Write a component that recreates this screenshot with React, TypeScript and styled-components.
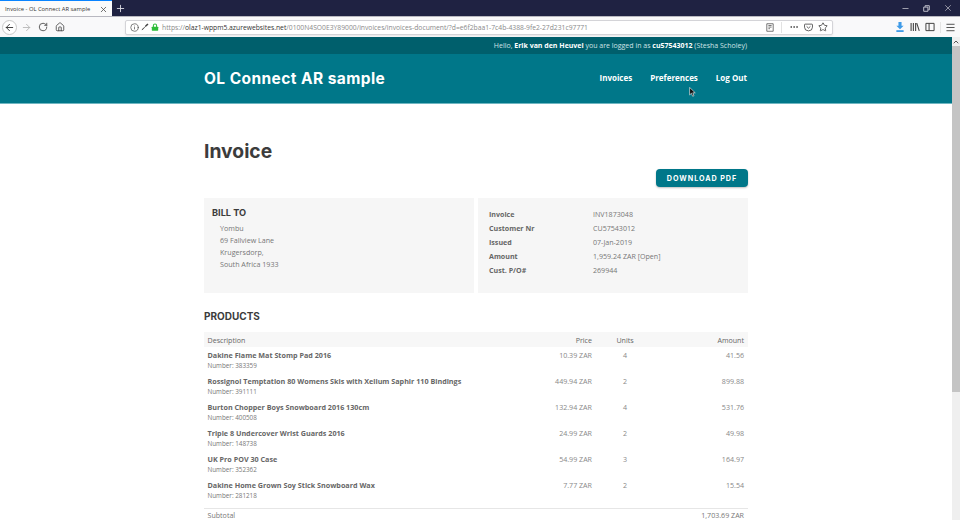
import React from 'react'
import styled, { createGlobalStyle } from 'styled-components'
import { ArrowLeft, ArrowRight, RotateCw, Home, Info, X, Plus, Minus, Star, MoreHorizontal, Menu, ChevronUp } from 'lucide-react'

const GlobalStyle = createGlobalStyle`
  html, body { margin: 0; padding: 0; height: 100%; overflow: hidden; background: #fff; }
  body { font-family: "Open Sans", "Liberation Sans", sans-serif; color: #666; }
  * { box-sizing: border-box; }
`

const products = [
  { name: 'Dakine Flame Mat Stomp Pad 2016', number: '383359', price: '10.39 ZAR', units: 4, amount: '41.56' },
  { name: 'Rossignol Temptation 80 Womens Skis with Xelium Saphir 110 Bindings', number: '391111', price: '449.94 ZAR', units: 2, amount: '899.88' },
  { name: 'Burton Chopper Boys Snowboard 2016 130cm', number: '400508', price: '132.94 ZAR', units: 4, amount: '531.76' },
  { name: 'Triple 8 Undercover Wrist Guards 2016', number: '148738', price: '24.99 ZAR', units: 2, amount: '49.98' },
  { name: 'UK Pro POV 30 Case', number: '352362', price: '54.99 ZAR', units: 3, amount: '164.97' },
  { name: 'Dakine Home Grown Soy Stick Snowboard Wax', number: '281218', price: '7.77 ZAR', units: 2, amount: '15.54' },
]

const details = [
  ['Invoice', 'INV1873048'],
  ['Customer Nr', 'CU57543012'],
  ['Issued', '07-Jan-2019'],
  ['Amount', '1,959.24 ZAR [Open]'],
  ['Cust. P/O#', '269944'],
]

const App: React.FC = () => (
  <Window>
    <GlobalStyle />
    <TabStrip>
      <Tab>
        <TabTitle>Invoice - OL Connect AR sample</TabTitle>
        <X size={9} color="#444" />
      </Tab>
      <NewTab><Plus size={11} color="#d8d8e0" /></NewTab>
      <WindowControls>
        <Minus size={9} color="#c8c8d0" />
        <RestoreIcon viewBox="0 0 10 10">
          <path d="M3 2.5V1h6v6H7.5M1 3h6v6H1z" fill="none" stroke="#d8d8e0" strokeWidth="1.2" />
        </RestoreIcon>
        <X size={10} color="#a8a8b4" />
      </WindowControls>
    </TabStrip>
    <Toolbar>
      <BackButton><ArrowLeft size={11} color="#333" /></BackButton>
      <ToolIcon><ArrowRight size={11} color="#b8b8b8" /></ToolIcon>
      <ToolIcon><RotateCw size={10} color="#444" /></ToolIcon>
      <ToolIcon><Home size={10} color="#444" /></ToolIcon>
      <UrlBar>
        <Info size={9} color="#555" />
        <UrlGlyph viewBox="0 0 10 10">
          <path d="M9.4 1.8 7 4.2a2 2 0 0 1-1.4.4L2.2 8.4.8 9.2l.6-1.6 3.7-3.3a2 2 0 0 1 .5-1.5L8 .6z" fill="#444" />
        </UrlGlyph>
        <UrlGlyph viewBox="0 0 10 10">
          <path d="M3 5V3.2a2 2 0 0 1 4 0V5" fill="none" stroke="#2ebd3a" strokeWidth="1.3" />
          <rect x="1" y="4.6" width="8" height="5.2" rx="0.6" fill="#2ebd3a" />
        </UrlGlyph>
        <Url>https://<b>olaz1-wppm5.azurewebsites.net</b>/0100N4SO0E3Y89000/invoices/invoices-document/?d=e6f2baa1-7c4b-4388-9fe2-27d231c97771</Url>
        <UrlActions>
          <ReaderIcon viewBox="0 0 10 11">
            <path d="M1 .8h8v9.4H1zM3 3h4M3 5h4M3 7h2" fill="none" stroke="#555" strokeWidth="1" />
          </ReaderIcon>
          <Divider />
          <MoreHorizontal size={10} color="#444" />
          <PocketIcon viewBox="0 0 12 11">
            <path d="M1.5 1h9a.8.8 0 0 1 .8.8V5a5.3 5 0 0 1-10.6 0V1.8A.8.8 0 0 1 1.5 1zM3.5 4 6 6.4 8.5 4" fill="none" stroke="#444" strokeWidth="1.1" />
          </PocketIcon>
          <Star size={10} color="#444" />
        </UrlActions>
      </UrlBar>
      <RightTools>
        <ToolGlyph viewBox="0 0 11 11">
          <path d="M3.8 0h3.4v4h2.3L5.5 8 1.5 4h2.3z" fill="#3f9be8" />
          <rect x="1.5" y="9" width="8" height="2" fill="#3f9be8" />
        </ToolGlyph>
        <ToolGlyph viewBox="0 0 11 11">
          <path d="M1.2 1v9M3.7 1v9M6.2 1v9M7.4 1.2l2.8 8.6" fill="none" stroke="#444" strokeWidth="1.2" />
        </ToolGlyph>
        <ToolGlyph viewBox="0 0 11 11">
          <path d="M1 1.5h9v8H1zM4.5 1.5v8" fill="none" stroke="#444" strokeWidth="1.1" />
        </ToolGlyph>
        <MenuDivider />
        <Menu size={11} color="#444" />
      </RightTools>
    </Toolbar>
    <Viewport>
      <Page>
        <UserBar>
          <UserBarInner>
            Hello, <strong>Erik van den Heuvel</strong> you are logged in as <strong>cu57543012</strong> (Stesha Scholey)
          </UserBarInner>
        </UserBar>
        <Header>
          <HeaderInner>
            <Brand>OL Connect AR sample</Brand>
            <Nav>
              <NavLink>Invoices</NavLink>
              <NavLink>Preferences</NavLink>
              <NavLink>Log Out</NavLink>
            </Nav>
          </HeaderInner>
        </Header>
        <Cursor viewBox="0 0 8 12">
          <path d="M.5.5v9l2.2-2 1.5 3.6 1.6-.7L4.3 7h3z" fill="#111" stroke="#fff" strokeWidth=".7" />
        </Cursor>
        <Content>
          <PageTitle>Invoice</PageTitle>
          <Actions>
            <PdfButton>DOWNLOAD PDF</PdfButton>
          </Actions>
          <Panels>
            <Panel>
              <PanelHeading>BILL TO</PanelHeading>
              <Address>
                <div>Yombu</div>
                <div>69 Fallview Lane</div>
                <div>Krugersdorp,</div>
                <div>South Africa 1933</div>
              </Address>
            </Panel>
            <DetailPanel>
              {details.map(([label, value]) => (
                <React.Fragment key={label}>
                  <DetailLabel>{label}</DetailLabel>
                  <span>{value}</span>
                </React.Fragment>
              ))}
            </DetailPanel>
          </Panels>
          <SectionHeading>PRODUCTS</SectionHeading>
          <TableHead>
            <span>Description</span>
            <Price>Price</Price>
            <Units>Units</Units>
            <Amount>Amount</Amount>
          </TableHead>
          {products.map((p) => (
            <ProductRow key={p.number}>
              <div>
                <ProductName>{p.name}</ProductName>
                <ProductNumber>Number: {p.number}</ProductNumber>
              </div>
              <Price>{p.price}</Price>
              <Units>{p.units}</Units>
              <Amount>{p.amount}</Amount>
            </ProductRow>
          ))}
          <SubtotalRow>
            <span>Subtotal</span>
            <Amount>1,703.69 ZAR</Amount>
          </SubtotalRow>
        </Content>
      </Page>
      <Scrollbar>
        <ScrollArrow><ChevronUp size={8} color="#555" strokeWidth={3} /></ScrollArrow>
        <ScrollThumb />
      </Scrollbar>
    </Viewport>
  </Window>
)

const Window = styled.div`
  width: 960px;
  height: 520px;
  display: flex;
  flex-direction: column;
  overflow: hidden;
`

const TabStrip = styled.div`
  height: 16px;
  flex: none;
  display: flex;
  background: #1f2242;
`

const Tab = styled.div`
  width: 112px;
  display: flex;
  align-items: center;
  justify-content: space-between;
  padding: 1px 4px 0 5px;
  background: #fbfbfb;
  border-top: 1px solid #0a84ff;
`

const TabTitle = styled.span`
  font-size: 5.8px;
  color: #333;
  white-space: nowrap;
`

const NewTab = styled.div`
  width: 16px;
  display: flex;
  align-items: center;
  justify-content: center;
`

const WindowControls = styled.div`
  margin-left: auto;
  width: 52px;
  margin-right: 7px;
  display: flex;
  align-items: center;
  justify-content: space-between;
`

const RestoreIcon = styled.svg`
  width: 7px;
  height: 7px;
`

const Toolbar = styled.div`
  height: 21px;
  flex: none;
  display: flex;
  align-items: center;
  padding: 0 4.5px 0 2px;
  background: #f9f9fa;
  border-top: 1px solid #b8b8c0;
`

const BackButton = styled.div`
  width: 15px;
  height: 15px;
  display: flex;
  align-items: center;
  justify-content: center;
  border: 1px solid #c8c8c8;
  border-radius: 50%;
  background: #fff;
`

const ToolIcon = styled.div`
  width: 16px;
  margin-left: 1px;
  display: flex;
  justify-content: center;
`

const UrlBar = styled.div`
  width: 708px;
  height: 15px;
  margin-left: 57px;
  display: flex;
  align-items: center;
  gap: 2px;
  padding: 0 4px;
  background: #fff;
  border: 1px solid #d4d4d8;
  border-radius: 2px;
  box-shadow: 0 1px 2px rgba(0, 0, 0, 0.08);
`

const UrlGlyph = styled.svg`
  width: 8px;
  height: 8px;
  flex: none;
`

const Url = styled.span`
  margin-left: 1px;
  font-size: 6.75px;
  color: #8a8a8a;
  white-space: nowrap;

  b {
    font-weight: 400;
    color: #333;
  }
`

const UrlActions = styled.div`
  margin-left: auto;
  display: flex;
  align-items: center;
  gap: 5px;
`

const ReaderIcon = styled.svg`
  width: 8px;
  height: 9px;
`

const Divider = styled.span`
  width: 1px;
  height: 11px;
  margin: 0 2px;
  background: #e2e2e2;
`

const PocketIcon = styled.svg`
  width: 9px;
  height: 9px;
`

const RightTools = styled.div`
  margin-left: auto;
  display: flex;
  align-items: center;
  gap: 5px;
`

const ToolGlyph = styled.svg`
  width: 10px;
  height: 10px;
  flex: none;
`

const MenuDivider = styled.span`
  width: 1px;
  height: 11px;
  margin: 0 -1px 0 0;
  background: #e4e4e4;
`

const Viewport = styled.div`
  flex: 1;
  min-height: 0;
  display: flex;
`

const Page = styled.div`
  position: relative;
  flex: 1;
  min-width: 0;
  overflow: hidden;
`

const UserBar = styled.div`
  height: 17px;
  display: flex;
  align-items: center;
  background: #005f6c;
  color: #cfe3e6;
  font-size: 7px;

  strong {
    color: #fff;
    font-weight: 700;
  }
`

const UserBarInner = styled.div`
  width: 543px;
  margin-left: 204px;
  text-align: right;
`

const Header = styled.div`
  height: 50px;
  background: #007789;
  border-bottom: 1px solid #6fb6c1;
`

const HeaderInner = styled.div`
  width: 543px;
  height: 100%;
  margin-left: 204px;
  display: flex;
  align-items: center;
  justify-content: space-between;
`

const Brand = styled.div`
  font-family: Inter, "Open Sans", sans-serif;
  font-size: 15.5px;
  font-weight: 700;
  letter-spacing: 0.42px;
  color: #fff;
  white-space: nowrap;
`

const Nav = styled.nav`
  display: flex;
  gap: 18px;
  margin-top: -2px;
`

const NavLink = styled.a`
  font-size: 8px;
  font-weight: 700;
  color: #fff;
`

const Cursor = styled.svg`
  position: absolute;
  left: 689px;
  top: 50px;
  width: 7px;
  height: 10px;
`

const Content = styled.main`
  width: 544px;
  margin-left: 204px;
  padding-top: 34px;
`

const PageTitle = styled.h1`
  margin: 0;
  font-family: Inter, "Open Sans", sans-serif;
  font-size: 19.3px;
  line-height: 27px;
  font-weight: 700;
  color: #3c3c3c;
`

const Actions = styled.div`
  display: flex;
  justify-content: flex-end;
  margin-top: 4px;
`

const PdfButton = styled.button`
  width: 92px;
  height: 18px;
  padding: 0;
  border: 0;
  border-radius: 4px;
  background: #007789;
  box-shadow: 0 1px 2px rgba(0, 0, 0, 0.25);
  color: #fff;
  font-family: Inter, "Open Sans", sans-serif;
  font-size: 7.2px;
  font-weight: 700;
  letter-spacing: 0.95px;
`

const Panels = styled.div`
  display: grid;
  grid-template-columns: 270px 270px;
  gap: 4px;
  margin-top: 11px;
`

const Panel = styled.section`
  height: 95px;
  padding: 9px 8px;
  background: #f6f6f6;
`

const PanelHeading = styled.h3`
  margin: 0;
  font-family: Inter, "Open Sans", sans-serif;
  font-size: 9.2px;
  line-height: 11px;
  font-weight: 700;
  color: #3c3c3c;
`

const Address = styled.div`
  margin: 4px 0 0 8px;
  font-size: 7.15px;
  line-height: 12px;
  color: #777;
`

const DetailPanel = styled(Panel)`
  display: grid;
  grid-template-columns: 104px 1fr;
  grid-auto-rows: 14px;
  align-items: center;
  padding: 9px 11px;
  font-size: 7.1px;
  color: #777;
`

const DetailLabel = styled.span`
  font-weight: 700;
  color: #666;
`

const SectionHeading = styled.h2`
  margin: 17px 0 10px;
  font-family: Inter, "Open Sans", sans-serif;
  font-size: 10px;
  line-height: 12px;
  font-weight: 700;
  color: #3c3c3c;
`

const TableHead = styled.div`
  display: grid;
  grid-template-columns: 1fr 50px 58px 90px;
  align-items: center;
  height: 15px;
  padding: 0 4px 0 3.5px;
  background: #f7f7f7;
  font-size: 7.1px;
  color: #666;
`

const Price = styled.span`
  padding-right: 4px;
  text-align: right;
`

const Units = styled.span`
  text-align: center;
`

const Amount = styled.span`
  text-align: right;
`

const ProductRow = styled(TableHead)`
  height: 26px;
  align-items: start;
  padding-top: 3px;
  background: none;
  color: #888;

  ${Units}, ${Price}, ${Amount} {
    line-height: 10px;
  }
`

const ProductName = styled.div`
  font-size: 7.2px;
  line-height: 10px;
  font-weight: 700;
  color: #666;
  white-space: nowrap;
`

const ProductNumber = styled.div`
  font-size: 6.3px;
  line-height: 11px;
  color: #777;
`

const SubtotalRow = styled.div`
  display: grid;
  grid-template-columns: 1fr auto;
  margin-top: 5px;
  padding: 2px 4px 0 3.5px;
  border-top: 1px solid #e6e6e6;
  font-size: 7.1px;
  line-height: 9px;
  color: #777;
`

const Scrollbar = styled.div`
  width: 8px;
  flex: none;
  display: flex;
  flex-direction: column;
  background: #efefef;
`

const ScrollArrow = styled.div`
  height: 9px;
  display: flex;
  align-items: center;
  justify-content: center;
`

const ScrollThumb = styled.div`
  height: 346px;
  background: #c4c4c4;
`

export default App
